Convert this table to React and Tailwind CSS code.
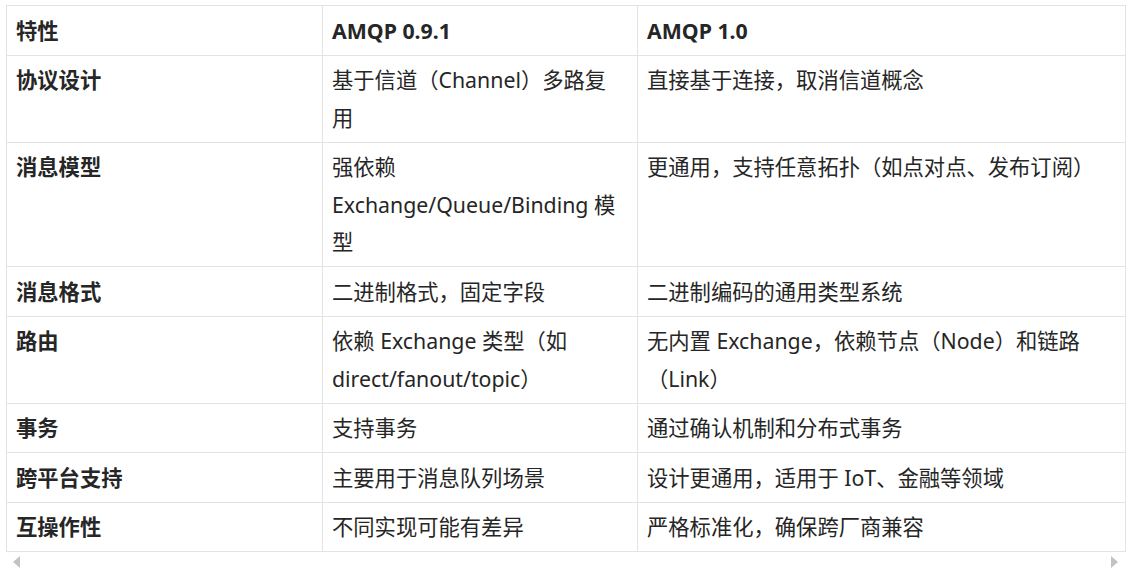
import React from "react";

const HEAD = ["特性", "AMQP 0.9.1", "AMQP 1.0"];

const ROWS = [
  ["协议设计", ["基于信道（Channel）多路复", "用"], ["直接基于连接，取消信道概念"]],
  ["消息模型", ["强依赖", "Exchange/Queue/Binding 模", "型"], ["更通用，支持任意拓扑（如点对点、发布订阅）"]],
  ["消息格式", ["二进制格式，固定字段"], ["二进制编码的通用类型系统"]],
  ["路由", ["依赖 Exchange 类型（如", "direct/fanout/topic）"], ["无内置 Exchange，依赖节点（Node）和链路", "（Link）"]],
  ["事务", ["支持事务"], ["通过确认机制和分布式事务"]],
  ["跨平台支持", ["主要用于消息队列场景"], ["设计更通用，适用于 IoT、金融等领域"]],
  ["互操作性", ["不同实现可能有差异"], ["严格标准化，确保跨厂商兼容"]],
];

const cell = "border border-[#e3e3e3] px-[9px] py-[5.5px] align-top text-left";

function Lines({ lines }) {
  return lines.map((l, i) => (
    <div key={i} className="whitespace-nowrap">{l}</div>
  ));
}

export default function App() {
  return (
    <div className="bg-white w-[1133px] h-[571px] overflow-hidden pt-[5px] pl-[6px] text-[21.3px] leading-[37.5px] text-[#262626] font-['Noto_Sans','Noto_Sans_CJK_SC',sans-serif]">
      <table className="table-fixed border-collapse w-[1119px]">
        <colgroup>
          <col className="w-[316px]" />
          <col className="w-[315px]" />
          <col className="w-[488px]" />
        </colgroup>
        <thead>
          <tr>
            {HEAD.map((h) => (
              <th key={h} className={cell + " font-bold"}>{h}</th>
            ))}
          </tr>
        </thead>
        <tbody>
          {ROWS.map(([name, a, b]) => (
            <tr key={name}>
              <td className={cell + " font-bold"}>{name}</td>
              <td className={cell}><Lines lines={a} /></td>
              <td className={cell}><Lines lines={b} /></td>
            </tr>
          ))}
        </tbody>
      </table>
      <div className="flex justify-between items-center w-[1119px] h-[20px] pl-[7px] pr-[7px]">
        <span className="w-0 h-0 border-y-[6px] border-y-transparent border-r-[7px] border-r-[#c2c2c2]" />
        <span className="w-0 h-0 border-y-[6px] border-y-transparent border-l-[7px] border-l-[#c2c2c2]" />
      </div>
    </div>
  );
}
